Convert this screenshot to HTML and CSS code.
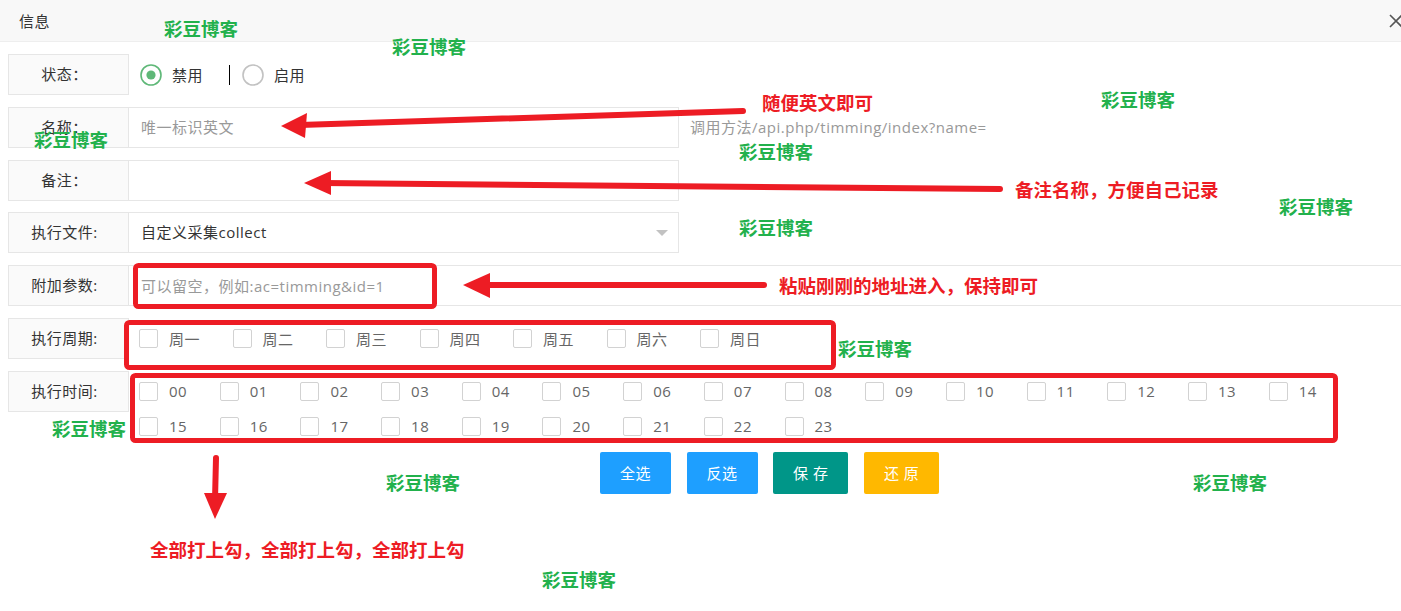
FILE: index.html
```html
<!DOCTYPE html>
<html>
<head>
  <meta charset="utf-8">
  <title>信息</title>
  <link rel="stylesheet" href="styles.css">
</head>
<body>
  <div class="layer">
    <div class="layer-title">
      <span>信息</span>
      <svg class="layer-close" width="14" height="14" viewBox="0 0 14 14">
        <path d="M1 1 L13 13 M13 1 L1 13" stroke="#555" stroke-width="1.6" fill="none"/>
      </svg>
    </div>

    <form class="form">
      <div class="form-item">
        <label class="form-label">状态：</label>
        <div class="radio-group">
          <span class="radio">
            <svg width="22" height="22" viewBox="0 0 22 22">
              <circle cx="11" cy="11" r="10" fill="none" stroke="#5FB878" stroke-width="1.6"/>
              <circle cx="11" cy="11" r="4.6" fill="#5FB878"/>
            </svg>
            禁用
          </span>
          <span class="caret"></span>
          <span class="radio">
            <svg width="22" height="22" viewBox="0 0 22 22">
              <circle cx="11" cy="11" r="10" fill="none" stroke="#c2c2c2" stroke-width="1.6"/>
            </svg>
            启用
          </span>
        </div>
      </div>

      <div class="form-item">
        <label class="form-label">名称：</label>
        <input class="input" type="text" placeholder="唯一标识英文">
        <div class="form-mid">调用方法/api.php/timming/index?name=</div>
      </div>

      <div class="form-item">
        <label class="form-label">备注：</label>
        <input class="input" type="text">
      </div>

      <div class="form-item">
        <label class="form-label">执行文件:</label>
        <div class="input select">
          <span>自定义采集collect</span>
          <i class="select-edge"></i>
        </div>
      </div>

      <div class="form-item">
        <label class="form-label">附加参数:</label>
        <input class="input input-block" type="text" placeholder="可以留空，例如:ac=timming&amp;id=1">
      </div>

      <div class="form-item">
        <label class="form-label">执行周期:</label>
        <div class="check-group days">
          <span class="check"><i></i>周一</span>
          <span class="check"><i></i>周二</span>
          <span class="check"><i></i>周三</span>
          <span class="check"><i></i>周四</span>
          <span class="check"><i></i>周五</span>
          <span class="check"><i></i>周六</span>
          <span class="check"><i></i>周日</span>
        </div>
      </div>

      <div class="form-item form-item-tight">
        <label class="form-label">执行时间:</label>
        <div class="check-group hours">
          <span class="check"><i></i>00</span>
          <span class="check"><i></i>01</span>
          <span class="check"><i></i>02</span>
          <span class="check"><i></i>03</span>
          <span class="check"><i></i>04</span>
          <span class="check"><i></i>05</span>
          <span class="check"><i></i>06</span>
          <span class="check"><i></i>07</span>
          <span class="check"><i></i>08</span>
          <span class="check"><i></i>09</span>
          <span class="check"><i></i>10</span>
          <span class="check"><i></i>11</span>
          <span class="check"><i></i>12</span>
          <span class="check"><i></i>13</span>
          <span class="check"><i></i>14</span>
          <span class="check"><i></i>15</span>
          <span class="check"><i></i>16</span>
          <span class="check"><i></i>17</span>
          <span class="check"><i></i>18</span>
          <span class="check"><i></i>19</span>
          <span class="check"><i></i>20</span>
          <span class="check"><i></i>21</span>
          <span class="check"><i></i>22</span>
          <span class="check"><i></i>23</span>
        </div>
      </div>

      <div class="btn-row">
        <button type="button" class="btn btn-normal">全选</button>
        <button type="button" class="btn btn-normal">反选</button>
        <button type="button" class="btn">保 存</button>
        <button type="button" class="btn btn-warm">还 原</button>
      </div>
    </form>

    <!-- hand-drawn notes on top of the form -->
    <svg class="notes" width="1401" height="611" viewBox="0 0 1401 611">
      <g class="marks">
        <rect x="135.5" y="265.5" width="299" height="41" rx="3"/>
        <rect x="126.5" y="322.5" width="707" height="45" rx="3"/>
        <rect x="132.5" y="375.5" width="1203" height="65" rx="3"/>
      </g>
      <g class="arrows">
        <path class="shaft" d="M300 125 L743 111"/>
        <polygon points="281,126 307,113 305,138"/>
        <path class="shaft" d="M322 183 L1000 189"/>
        <polygon points="304,183 331,171 331,195"/>
        <path class="shaft" d="M482 285 L764 285"/>
        <polygon points="463,285 490,273 490,298"/>
        <path class="shaft" d="M216 458 L215 500"/>
        <polygon points="204,493 227,493 215,519"/>
      </g>
      <g class="note">
        <text x="762" y="102">随便英文即可</text>
        <text x="1015" y="189">备注名称，方便自己记录</text>
        <text x="779" y="285">粘贴刚刚的地址进入，保持即可</text>
        <text x="150" y="549">全部打上勾，全部打上勾，全部打上勾</text>
      </g>
      <g class="stamp">
        <text x="164" y="28">彩豆博客</text>
        <text x="392" y="46">彩豆博客</text>
        <text x="1101" y="99">彩豆博客</text>
        <text x="34" y="139">彩豆博客</text>
        <text x="739" y="151">彩豆博客</text>
        <text x="1279" y="206">彩豆博客</text>
        <text x="739" y="227">彩豆博客</text>
        <text x="838" y="348">彩豆博客</text>
        <text x="52" y="428">彩豆博客</text>
        <text x="386" y="482">彩豆博客</text>
        <text x="1193" y="482">彩豆博客</text>
        <text x="542" y="579">彩豆博客</text>
      </g>
    </svg>
  </div>
</body>
</html>
```

FILE: styles.css
```css
html, body {
  margin: 0;
  overflow: hidden;
}

body {
  font-family: "Open Sans", "Noto Sans CJK SC", sans-serif;
  font-size: 15px;
  letter-spacing: 0.5px;
  color: #333;
  background: #fff;
}

.layer {
  position: relative;
  width: 1420px;
  height: 611px;
}

.layer-title {
  display: flex;
  align-items: center;
  height: 41px;
  padding: 0 17px 0 19px;
  background: #f8f8f8;
  border-bottom: 1px solid #eee;
}

.layer-close {
  margin-left: auto;
}

.form {
  padding: 12px 0 0 8px;
}

.form-item {
  display: flex;
  align-items: flex-start;
  margin-bottom: 11.75px;
}

.form-item-tight {
  margin-bottom: 8px;
}

.form-label {
  flex: none;
  width: 121px;
  height: 41px;
  box-sizing: border-box;
  padding-right: 8px;
  border: 1px solid #e6e6e6;
  background: #fafafa;
  line-height: 39px;
  text-align: center;
}

.input {
  width: 550px;
  height: 41px;
  box-sizing: border-box;
  margin: 0;
  padding: 0 0 0 12px;
  border: 1px solid #e6e6e6;
  border-left: 0;
  background: #fff;
  font: inherit;
  letter-spacing: inherit;
  color: #333;
  line-height: 39px;
  outline: none;
}

.input::placeholder {
  color: #999;
}

.input-block {
  flex: 1;
  width: auto;
}

.form-mid {
  padding-left: 11px;
  line-height: 41px;
  color: #999;
}

.select {
  display: flex;
  align-items: center;
}

.select-edge {
  margin-left: auto;
  margin-right: 10px;
  border-top: 6px solid #c2c2c2;
  border-left: 6px solid transparent;
  border-right: 6px solid transparent;
}

/* radios */
.radio-group {
  display: flex;
  align-items: center;
  height: 41px;
  padding-left: 11px;
}

.radio {
  display: flex;
  align-items: center;
}

.radio svg {
  margin-right: 10px;
}

.caret {
  width: 1px;
  height: 20px;
  margin: 0 12px 0 26px;
  background: #000;
}

/* checkboxes */
.check-group {
  flex: 1;
  display: flex;
  flex-wrap: wrap;
  padding: 3px 0 0 10px;
}

.check {
  display: flex;
  align-items: center;
  height: 35px;
  color: #666;
}

.days .check {
  width: 93.5px;
}

.hours .check {
  width: 80.7px;
}

.check i {
  width: 19px;
  height: 19px;
  box-sizing: border-box;
  margin-right: 11px;
  border: 1px solid #d2d2d2;
  border-radius: 2px;
  background: #fff;
}

/* buttons */
.btn-row {
  display: flex;
  gap: 15.5px;
  margin-left: 592px;
}

.btn {
  height: 42px;
  padding: 0 20px;
  border: 0;
  border-radius: 2px;
  background: #009688;
  color: #fff;
  font: inherit;
  letter-spacing: inherit;
  line-height: 42px;
  cursor: pointer;
}

.btn-normal {
  background: #1E9FFF;
}

.btn-warm {
  background: #FFB800;
}

/* notes layer */
.notes {
  position: absolute;
  top: 0;
  left: 0;
  pointer-events: none;
  letter-spacing: 0;
}

.marks rect {
  fill: none;
  stroke: #ed1c24;
  stroke-width: 5;
}

.arrows polygon {
  fill: #ed1c24;
}

.arrows .shaft {
  fill: none;
  stroke: #ed1c24;
  stroke-width: 6;
  stroke-linecap: round;
}

.note text,
.stamp text {
  font-family: "Noto Sans CJK SC", sans-serif;
  font-size: 18.5px;
  font-weight: 700;
  dominant-baseline: central;
}

.note text {
  fill: #ed1c24;
}

.stamp text {
  fill: #22b14c;
}
```
